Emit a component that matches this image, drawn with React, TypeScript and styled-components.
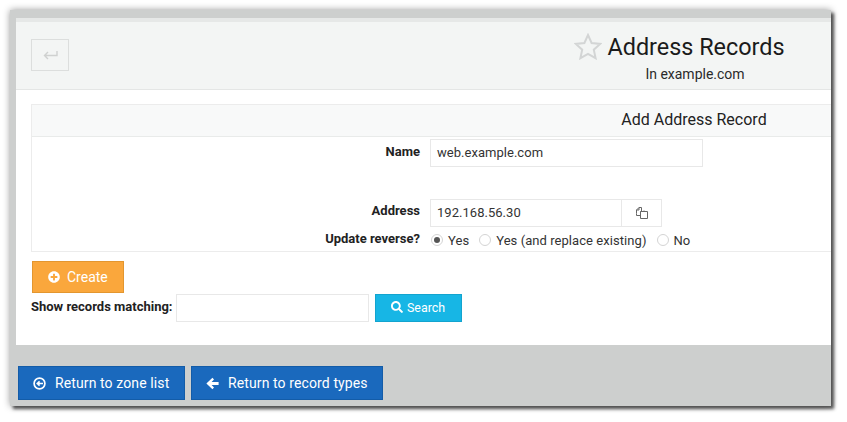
import React from "react";
import styled, { createGlobalStyle } from "styled-components";
import { FaPlusCircle, FaSearch } from "react-icons/fa";

const Global = createGlobalStyle`
  html { margin: 0; padding: 0; background: #fff; overflow: hidden; }
  body { margin: 0; padding: 0; }
  * { box-sizing: border-box; }
  body { font-family: Roboto, "Liberation Sans", sans-serif; font-size: 13px; color: #222; }
  #root { padding: 10px 0 0 10px; height: 422px; }
`;

const Frame = styled.div`
  width: 821px;
  height: 396px;
  padding: 8px 0 0 6px;
  background: #cdcfce;
  overflow: hidden;
  box-shadow: 3px 3px 3px rgba(50, 50, 50, 0.8), 0 0 7px rgba(0, 0, 0, 0.4);
`;

const Panel = styled.div`
  width: 815px;
  height: 327px;
  background: #fff;
  overflow: hidden;
`;

const Inner = styled.div`
  width: 1358px;
`;

const Header = styled.header`
  position: relative;
  height: 72px;
  background: #f3f5f4;
  border-top: 4px solid #e6e8e7;
  border-bottom: 1px solid #e4e6e5;
  display: flex;
  flex-direction: column;
  align-items: center;
  padding-top: 9px;
`;

const BackButton = styled.button`
  position: absolute;
  left: 15px;
  top: 17px;
  width: 38px;
  height: 32px;
  padding: 0;
  background: transparent;
  border: 1px solid #dcdedd;
  display: flex;
  align-items: center;
  justify-content: center;
`;

const TitleRow = styled.div`
  position: relative;
  display: flex;
  margin-left: 2px;
`;

const Title = styled.h1`
  margin: 0;
  font-size: 23.4px;
  font-weight: 400;
  line-height: 32px;
  color: #1b1b1b;
`;

const StarIcon = styled.svg`
  position: absolute;
  left: -33px;
  top: 2px;
`;

const Subtitle = styled.div`
  font-size: 14px;
  line-height: 20px;
  margin-top: 1px;
  color: #2a2a2a;
`;

const FormBox = styled.section`
  margin: 14px 0 0 15px;
  width: 1326px;
  height: 148px;
  border: 1px solid #ececec;
`;

const BoxHeading = styled.div`
  height: 32px;
  background: #f8f9f9;
  border-bottom: 1px solid #e9ebea;
  text-align: center;
  font-size: 16px;
  line-height: 29px;
  color: #222;
`;

const Row = styled.div<{ $height: number; $top?: number }>`
  display: grid;
  grid-template-columns: 388px 1fr;
  column-gap: 10px;
  height: ${(p) => p.$height}px;
  padding-top: ${(p) => p.$top ?? 0}px;
  align-items: start;
`;

const Label = styled.label<{ $top: number }>`
  font-weight: 700;
  font-size: 13px;
  line-height: 16px;
  text-align: right;
  color: #222;
  padding-top: ${(p) => p.$top}px;
`;

const TextInput = styled.div<{ $width: number }>`
  width: ${(p) => p.$width}px;
  height: 28px;
  border: 1px solid #e8e8e8;
  background: #fff;
  padding: 0 6px;
  font-size: 13px;
  line-height: 26px;
  letter-spacing: 0.03px;
  color: #333;
`;

const InputGroup = styled.div`
  display: flex;
`;

const Addon = styled.div`
  width: 40px;
  height: 28px;
  border: 1px solid #e8e8e8;
  border-left: 0;
  display: flex;
  align-items: center;
  justify-content: center;
  padding-left: 1px;
`;

const RadioGroup = styled.div`
  display: flex;
  align-items: center;
  height: 22px;
  padding-top: 2px;
  font-size: 13px;
  letter-spacing: 0.06px;
  color: #333;
`;

const Radio = styled.span<{ $on?: boolean }>`
  width: 12px;
  height: 12px;
  border-radius: 50%;
  border: 1px solid #d4d4d4;
  background: #fff;
  margin: 0 5px 0 ${(p) => (p.$on ? 1 : 10)}px;
  display: flex;
  align-items: center;
  justify-content: center;
  &::after {
    content: "";
    width: 6px;
    height: 6px;
    border-radius: 50%;
    background: ${(p) => (p.$on ? "#555" : "transparent")};
  }
`;

const Actions = styled.div`
  padding: 9px 0 0 16px;
`;

const CreateButton = styled.button`
  display: flex;
  align-items: center;
  gap: 7px;
  width: 92px;
  height: 32px;
  padding: 0 0 0 15px;
  background: #faa73c;
  border: 1px solid #e3962f;
  color: #fff;
  font: 400 14px Roboto, sans-serif;
`;

const SearchRow = styled.div`
  display: flex;
  align-items: flex-start;
  margin: 1px 0 0 15px;
`;

const SearchLabel = styled.label`
  font-weight: 700;
  font-size: 13px;
  line-height: 16px;
  padding-top: 5px;
  margin-right: 3px;
  width: 142px;
  white-space: nowrap;
  color: #222;
`;

const SearchInput = styled(TextInput)`
  margin-right: 6px;
`;

const SearchButton = styled.button`
  display: flex;
  align-items: center;
  gap: 4px;
  width: 87px;
  height: 28px;
  padding: 0 0 2px 15px;
  background: #17b6e5;
  border: 1px solid #13a4cf;
  color: #fff;
  font: 400 12.4px Roboto, sans-serif;
`;

const Footer = styled.div`
  display: flex;
  gap: 6px;
  margin: 21px 0 0 2px;
`;

const NavButton = styled.button<{ $width: number }>`
  display: flex;
  align-items: center;
  gap: 9px;
  width: ${(p) => p.$width}px;
  height: 34px;
  padding: 0 0 0 14px;
  background: #1a69bd;
  border: 1px solid #135ca8;
  color: #fff;
  font: 400 14px Roboto, sans-serif;
  letter-spacing: 0.11px;
  white-space: nowrap;
`;

const CircleArrow = () => (
  <svg width="13" height="13" viewBox="0 0 13 13" fill="none" stroke="#fff">
    <circle cx="6.5" cy="6.5" r="5.4" strokeWidth="1.7" />
    <path d="M10 6.5H5.2M6.6 4.4 4.3 6.5l2.3 2.1" strokeWidth="1.6" />
  </svg>
);

const BoldArrow = () => (
  <svg width="13" height="13" viewBox="0 0 13 13" fill="#fff">
    <path d="M6.4.8 8 2.4 5.6 4.9H12.6V8.1H5.6L8 10.6 6.4 12.2.4 6.5z" />
  </svg>
);

const FilesIcon = () => (
  <svg width="12" height="12" viewBox="0 0 12 12" fill="#fff" stroke="#666" strokeWidth="1">
    <path d="M.5 6.5V3L3 .5H5.5V8.5H.5z" />
    <path d="M4.5 4.5H7L8 3.5M4.5 4.5V11.5H11.5V4.5z" />
    <path d="M3 .5V3H.5" fill="none" />
  </svg>
);

export default function App() {
  return (
    <>
      <Global />
      <Frame>
        <Panel>
          <Inner>
            <Header>
              <BackButton aria-label="Back">
                <svg width="15" height="11" viewBox="0 0 15 11" fill="none" stroke="#cfd1d0" strokeWidth="1.4">
                  <path d="M14 1v4.5H2M5 2 1.5 5.5 5 9" />
                </svg>
              </BackButton>
              <TitleRow>
                <StarIcon width="28" height="27" viewBox="0 0 28 27" fill="none" stroke="#d3d5d5" strokeWidth="2">
                  <path d="M14 2l3.6 8 8.6.9-6.4 5.8 1.8 8.5L14 20.8l-7.6 4.4 1.8-8.5-6.4-5.8 8.6-.9z" />
                </StarIcon>
                <Title>Address Records</Title>
              </TitleRow>
              <Subtitle>In example.com</Subtitle>
            </Header>
            <FormBox>
              <BoxHeading>Add Address Record</BoxHeading>
              <Row $height={62} $top={2}>
                <Label $top={5}>Name</Label>
                <TextInput $width={273}>web.example.com</TextInput>
              </Row>
              <Row $height={29}>
                <Label $top={4}>Address</Label>
                <InputGroup>
                  <TextInput $width={192}>192.168.56.30</TextInput>
                  <Addon>
                    <FilesIcon />
                  </Addon>
                </InputGroup>
              </Row>
              <Row $height={22}>
                <Label $top={3}>Update reverse?</Label>
                <RadioGroup>
                  <Radio $on />
                  Yes
                  <Radio />
                  Yes (and replace existing)
                  <Radio />
                  No
                </RadioGroup>
              </Row>
            </FormBox>
            <Actions>
              <CreateButton>
                <FaPlusCircle size={12} />
                Create
              </CreateButton>
            </Actions>
            <SearchRow>
              <SearchLabel>Show records matching:</SearchLabel>
              <SearchInput $width={193} />
              <SearchButton>
                <FaSearch size={12} />
                Search
              </SearchButton>
            </SearchRow>
          </Inner>
        </Panel>
        <Footer>
          <NavButton $width={167}>
            <CircleArrow />
            Return to zone list
          </NavButton>
          <NavButton $width={192}>
            <BoldArrow />
            Return to record types
          </NavButton>
        </Footer>
      </Frame>
    </>
  );
}
